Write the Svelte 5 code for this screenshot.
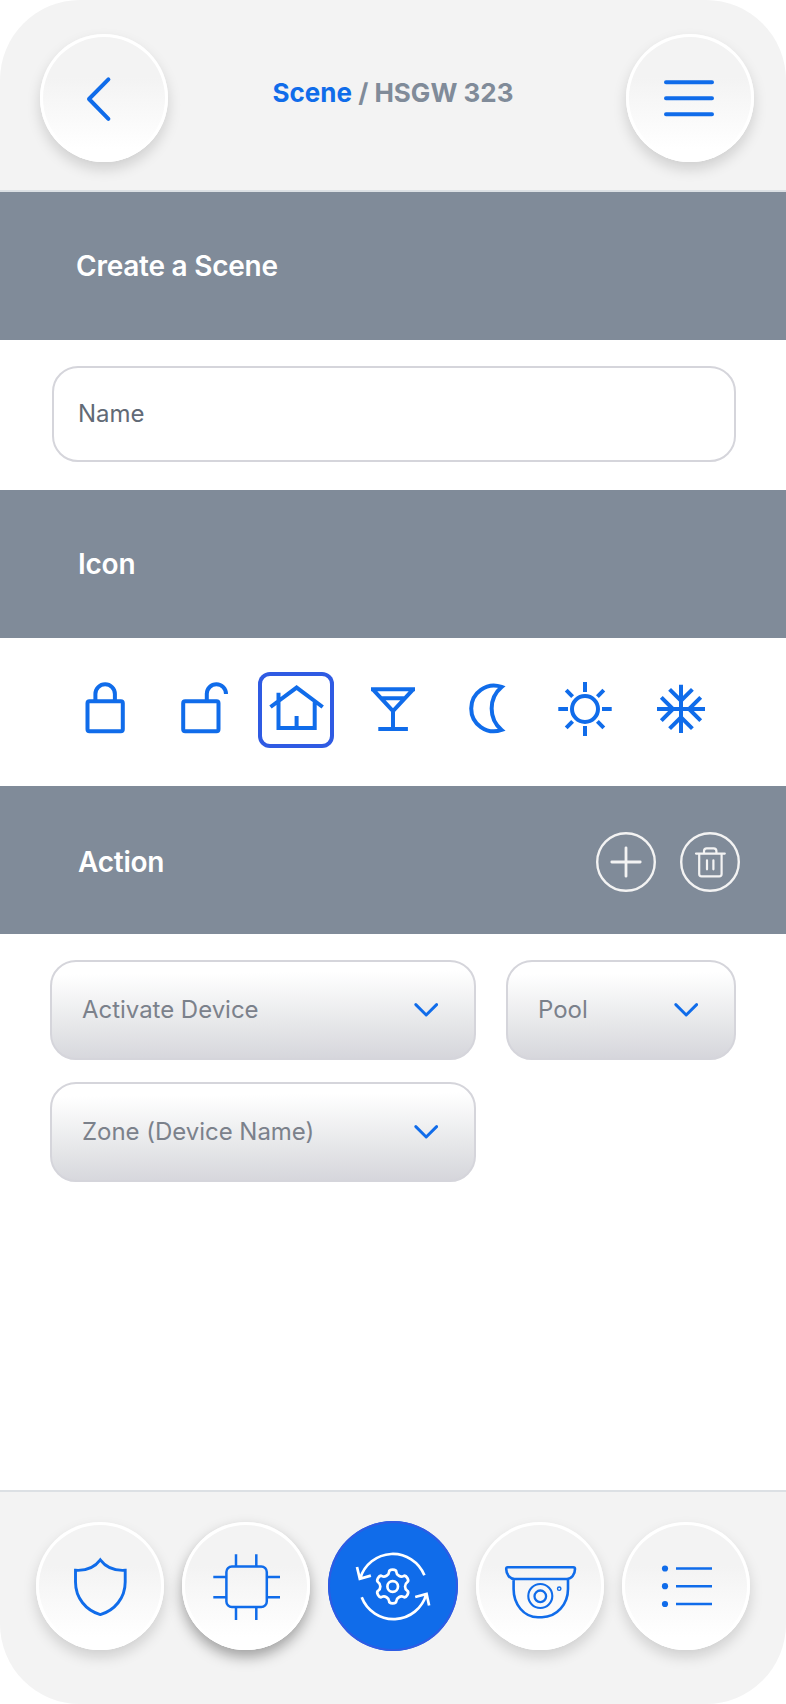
<script>
  const selected = 'home';
  const sceneIcons = ['lock', 'unlock', 'home', 'drink', 'moon', 'sun', 'snow'];
  const navItems = ['shield', 'chip', 'scene', 'camera', 'list'];

  // Rounded six-tooth cog, smoothed through the midpoints of its outline.
  function cog(cx, cy, outer, inner) {
    const pts = [];
    for (let i = 0; i < 6; i++) {
      const a = -90 + i * 60;
      for (const [d, r] of [[-12, outer], [12, outer], [17, inner], [43, inner]]) {
        const t = ((a + d) * Math.PI) / 180;
        pts.push([cx + r * Math.cos(t), cy + r * Math.sin(t)]);
      }
    }
    const mid = (p, q) => `${((p[0] + q[0]) / 2).toFixed(2)} ${((p[1] + q[1]) / 2).toFixed(2)}`;
    let d = `M${mid(pts[pts.length - 1], pts[0])}`;
    pts.forEach((p, i) => {
      d += `Q${p[0].toFixed(2)} ${p[1].toFixed(2)} ${mid(p, pts[(i + 1) % pts.length])}`;
    });
    return d + 'Z';
  }
  const cogPath = cog(64.7, 65.5, 17.3, 12.7);
</script>

{#snippet select(label)}
  <button class="select">
    <span>{label}</span>
    <svg width="24" height="14" viewBox="0 0 24 14"><path d="M1.8 1.6L12.2 12L22.6 1.6" /></svg>
  </button>
{/snippet}

<main class="screen">
  <header>
    <button class="round" aria-label="Back">
      <svg viewBox="0 0 128 128" class="w4 cap"><path d="M68.4 45.4L49 65L68.4 84.9" /></svg>
    </button>
    <h1><b>Scene</b> / HSGW 323</h1>
    <button class="round" aria-label="Menu">
      <svg viewBox="0 0 128 128" class="w4 cap"><path d="M40 48.3H86M40 64.3H86M40 80.3H86" /></svg>
    </button>
  </header>

  <section class="band first"><h2>Create a Scene</h2></section>
  <div class="name-row"><div class="field"><span>Name</span></div></div>

  <section class="band"><h2>Icon</h2></section>
  <div class="icons">
    {#each sceneIcons as name}
      <button class="pick" class:selected={name === selected} aria-label={name}>
        <svg viewBox="0 0 76 76" class="w4">
          {#if name === 'lock'}
            <rect x="21.5" y="29.3" width="35.3" height="30" rx="2" />
            <path d="M29.4 29V22A9.7 9.7 0 0 1 48.9 22V29" />
          {:else if name === 'unlock'}
            <rect x="21.2" y="29.3" width="35.3" height="30" rx="2" />
            <path d="M44.8 29V21.8A9.6 9.6 0 0 1 64 22" />
          {:else if name === 'home'}
            <path d="M20.5 20.8V56.1H56.7V29M12.5 35L38.6 15.6L64.7 35M38.6 44V56" />
          {:else if name === 'drink'}
            <path d="M17 17.2H61M18.6 17.2L39 39L59.4 17.2M26 26.3H52M39 38V57M24.3 56.9H53.9" />
          {:else if name === 'moon'}
            <path d="M51.6 14.9A22.8 22.8 0 1 0 51.6 57.9A28.2 28.2 0 0 1 51.6 14.9Z" />
          {:else if name === 'sun'}
            <circle cx="39" cy="37" r="13" />
            <path d="M39 10V20M39 54V64M12.3 37H22M56 37H65.7M20.2 18.2L26.6 24.6M57.8 18.2L51.4 24.6M20.2 55.8L26.6 49.4M57.8 55.8L51.4 49.4" />
          {:else}
            <path d="M39 12.8V61M15 37H63M27.6 17.3L39 28.7L50.4 17.3M27.6 56.7L39 45.3L50.4 56.7M19.3 25.3L31 37L19.3 48.7M58.7 25.3L47 37L58.7 48.7" />
          {/if}
        </svg>
      </button>
    {/each}
  </div>

  <section class="band action">
    <h2>Action</h2>
    <div class="tools">
      <button class="tool" aria-label="Add">
        <svg viewBox="0 0 60 60" class="cap"><circle cx="30" cy="30" r="28.8" stroke-width="2.4" /><path stroke-width="2.8" d="M30 15.8V44.2M15.8 30H44.2" /></svg>
      </button>
      <button class="tool" aria-label="Delete">
        <svg viewBox="0 0 60 60" class="cap"><circle cx="30" cy="30" r="28.8" stroke-width="2.4" /><path stroke-width="2.2" d="M16 21.6H44.8M24 21.4V19Q24 16.3 26.7 16.3H33.7Q36.4 16.3 36.4 19V21.4M19.2 22V42Q19.2 44.3 21.5 44.3H39.3Q41.6 44.3 41.6 42V22M27 28.3V37.3M33.4 28.3V37.3" /></svg>
      </button>
    </div>
  </section>
  <div class="actions">
    {@render select('Activate Device')}
    {@render select('Pool')}
    {@render select('Zone (Device Name)')}
  </div>

  <nav>
    {#each navItems as name}
      <button class="round {name}" aria-label={name}>
        {#if name === 'shield'}
          <svg viewBox="0 0 128 128"><path stroke-width="2.9" d="M64.3 37.9C59 45 50.5 49 39.5 48.3V60C39.5 76 50 88.5 64.3 92.6C78.6 88.5 89.2 76 89.2 60V48.3C78.2 49 69.6 45 64.3 37.9Z" /></svg>
        {:else if name === 'chip'}
          <svg viewBox="0 0 128 128"><g stroke-width="2.5"><rect x="44.4" y="44.4" width="40.4" height="40.6" rx="5.5" /><path d="M54 32.2V44M74.3 32.2V44M54 85.5V98M74.3 85.5V98M31.3 55H44M31.3 75.3H44M85.3 55H98M85.3 75.3H98" /></g></svg>
        {:else if name === 'scene'}
          <svg viewBox="0 0 130 130"><g stroke-width="2.7"><path d={cogPath} /><circle cx="64.7" cy="65.5" r="5.3" /><path d="M96.4 54.3A34 34 0 0 0 32.2 57.5M33.7 76.3A34 34 0 0 0 98.3 73M29 46L31.8 57.9L42.9 54.6M87.2 76L98.6 72.9L101.1 84.5" /></g></svg>
        {:else if name === 'camera'}
          <svg viewBox="0 0 128 128"><path stroke-width="2.6" d="M31.7 45.2H97.3Q99 45.2 99 47C99 52.5 95.5 57 91 57H38.5C34 57 30.2 52.5 30.2 47Q30.2 45.2 31.7 45.2ZM37.6 57V67C37.6 82 47.5 95.2 62 95.2H66C81 95.2 92 82 92 67V57" /><circle cx="64.3" cy="74" r="12" stroke-width="2.1" /><circle cx="64.3" cy="74.3" r="5.8" stroke-width="2.3" /><circle cx="83.2" cy="66.7" r="1.7" stroke-width="1.4" /></svg>
        {:else}
          <svg viewBox="0 0 128 128"><path stroke-width="2.6" d="M54 46.5H90M54 64.2H90M54 82H90" /><g class="dots"><circle cx="43" cy="46.5" r="3.1" /><circle cx="43" cy="64.2" r="3.1" /><circle cx="43" cy="82" r="3.1" /></g></svg>
        {/if}
      </button>
    {/each}
  </nav>
</main>

<style>
  :global(body) { background: #fff; }
  * { box-sizing: border-box; }
  button { appearance: none; margin: 0; padding: 0; border: 0; background: none; font: inherit; color: inherit; }
  svg { display: block; fill: none; stroke: #106cea; }
  .w4 { stroke-width: 4; }
  .cap { stroke-linecap: round; stroke-linejoin: round; }
  .screen {
    width: 786px; height: 1704px; display: flex; flex-direction: column;
    overflow: hidden; border-radius: 80px; background: #fff;
    font-family: Inter, sans-serif;
  }
  header {
    height: 192px; padding: 34px 32px 0 40px; display: flex; align-items: flex-start;
    justify-content: space-between; background: #f3f3f3; border-bottom: 2px solid #dce0e4;
  }
  h1 { margin: 0; padding: 43px 8px 0 0; font-size: 26px; line-height: 32px; font-weight: 700; color: #808b99; white-space: nowrap; }
  h1 b { font-weight: inherit; color: #106cea; }
  .round {
    width: 128px; height: 128px; flex: none; border-radius: 50%;
    background: linear-gradient(#f3f3f3 34%, #fff 90%);
    box-shadow: inset 0 0 0 3px #fff, 0 7px 14px rgba(0, 0, 0, 0.15);
  }
  .band {
    height: 148px; padding: 0 46px 0 78px; display: flex; align-items: center;
    justify-content: space-between; background: #808b99;
  }
  .band.first { padding-left: 76px; }
  .band.action { padding-top: 4px; }
  h2 { margin: 0; color: #fff; font-size: 28px; line-height: 34px; font-weight: 600; letter-spacing: -0.24px; }
  .name-row { height: 150px; padding: 26px 50px 0 52px; }
  .field {
    height: 96px; display: flex; align-items: center; padding-left: 24px; border: 2px solid #d5d5db;
    border-radius: 26px; color: #626a76; font-size: 24px;
  }
  .field span, .select span { padding-bottom: 2px; }
  .icons { height: 148px; padding: 34px 66px 0; display: flex; gap: 20px; }
  .pick { width: 76px; height: 76px; flex: none; border-radius: 12px; }
  .selected { box-shadow: inset 0 0 0 4px #2f5be3; }
  .tools { display: flex; gap: 24px; }
  .tool { width: 60px; height: 60px; }
  .tool svg { stroke: #f3f3f3; }
  .actions { padding: 26px 50px 0; display: grid; grid-template-columns: 426px 230px; gap: 22px 30px; }
  .select {
    height: 100px; padding: 0 36px 0 30px; display: flex; align-items: center; justify-content: space-between;
    border: 2px solid #d5d5db; border-radius: 26px; color: #7b818b; font-size: 24px; letter-spacing: -0.03px;
    background: linear-gradient(179.4deg, #fff 14%, #e6e7e9 64%, #d5d5db 99%) border-box;
  }
  .select svg { stroke-width: 2.9; stroke-linecap: round; stroke-linejoin: round; }
  nav {
    height: 214px; margin-top: auto; padding: 30px 36px 0; display: flex; align-items: flex-start;
    justify-content: space-between; background: #f3f3f3; border-top: 2px solid #dce0e4;
  }
  .round.chip { box-shadow: inset 0 0 0 3px #fff, 0 7px 14px rgba(0, 0, 0, 0.34); }
  .round.scene { width: 130px; height: 130px; margin-top: -1px; background: #106cea; box-shadow: inset 0 0 0 2px #2f5be3; }
  .scene svg { stroke: #fff; }
  .dots { fill: #106cea; stroke: none; }
</style>
